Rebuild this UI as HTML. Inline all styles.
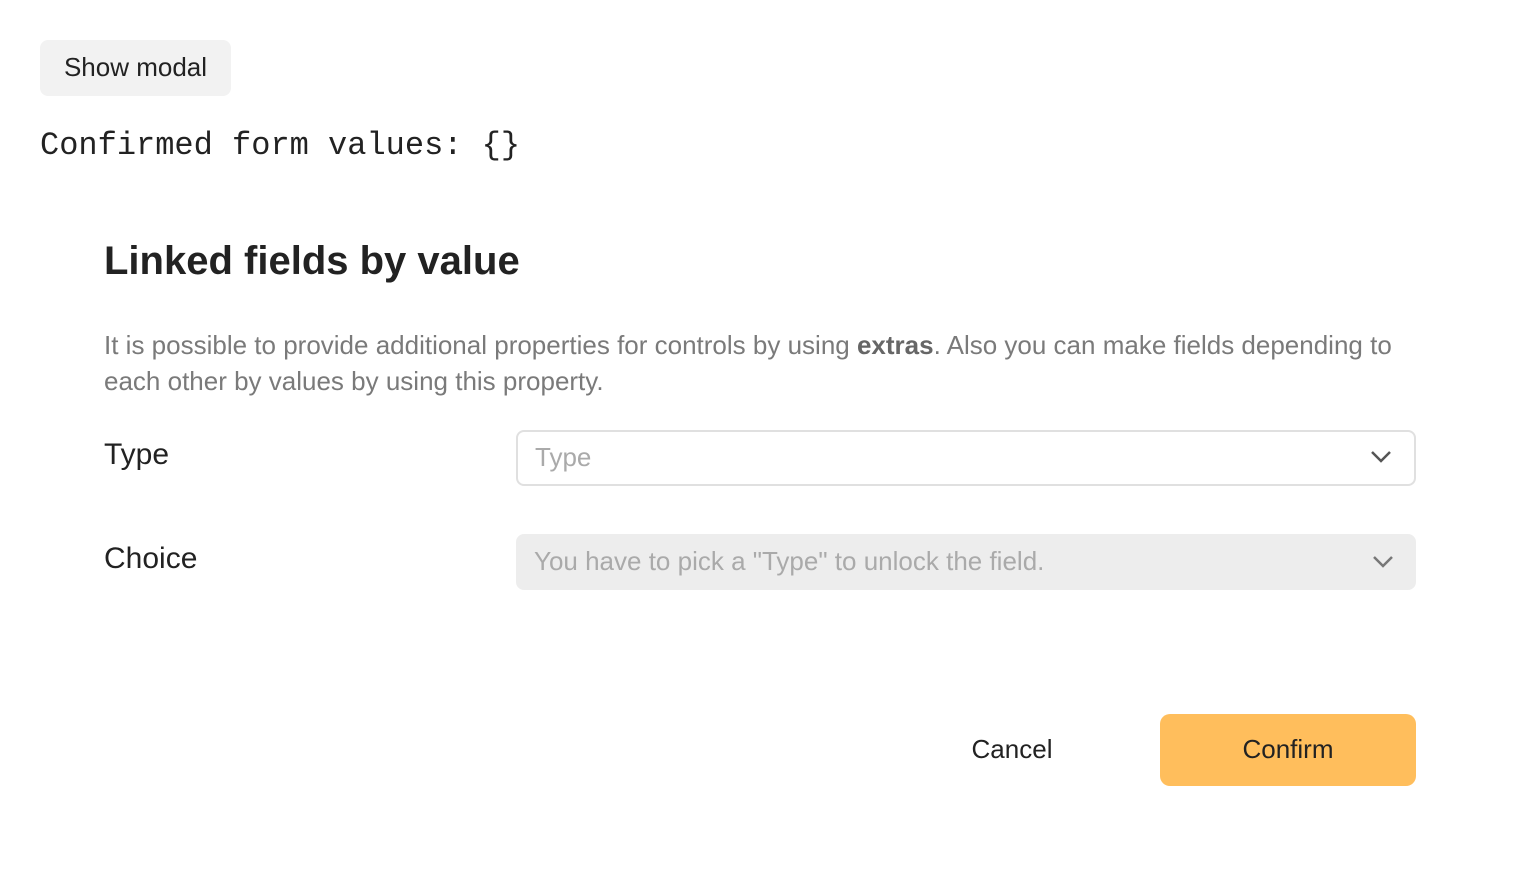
<!DOCTYPE html>
<html><head><style>
body{margin:0;width:1520px;height:882px;background:#fff;font-family:"Liberation Sans",sans-serif;position:relative;overflow:hidden}
.abs{position:absolute}
.btn{left:40px;top:40px;width:191px;height:56px;background:#f2f2f2;border-radius:8px;font-size:26px;color:#222;line-height:54px;text-align:center}
.mono{left:40px;top:130px;font-family:"Liberation Mono",monospace;font-size:32px;color:#222;line-height:32px}
h1{position:absolute;left:104px;top:239px;margin:0;font-size:40px;font-weight:bold;color:#222}
.desc{left:104px;top:327px;width:1320px;font-size:26px;line-height:36px;color:#7a7a7a}
.desc b{color:#666}
.lbl{left:104px;font-size:30px;color:#222}
.sel{left:516px;height:52px;border-radius:8px;font-size:26px;line-height:52px;padding-left:18px;box-sizing:border-box;width:900px}
.sel svg{position:absolute;right:22px;top:18px}
.cancel{left:912px;top:714px;width:200px;height:72px;line-height:70px;text-align:center;font-size:26px;color:#222}
.confirm{left:1160px;top:714px;width:256px;height:72px;line-height:70px;text-align:center;font-size:26px;color:#222;background:#ffbe5c;border-radius:10px}
</style></head><body>
<div class="abs btn">Show modal</div>
<div class="abs mono">Confirmed form values: {}</div>
<h1>Linked fields by value</h1>
<div class="abs desc">It is possible to provide additional properties for controls by using <b>extras</b>. Also you can make fields depending to each other by values by using this property.</div>
<div class="abs lbl" style="top:438px">Type</div>
<div class="abs sel" style="top:430px;height:56px;border:2px solid #e0e0e0;color:#aaa;line-height:50px;padding-left:17px">Type<svg width="22" height="14" viewBox="0 0 22 14"><path d="M2 2l9 9 9-9" stroke="#555" stroke-width="2.5" fill="none"/></svg></div>
<div class="abs lbl" style="top:542px">Choice</div>
<div class="abs sel" style="top:534px;height:56px;line-height:54px;background:#ededed;color:#aaa">You have to pick a "Type" to unlock the field.<svg width="22" height="14" viewBox="0 0 22 14" style="top:21px"><path d="M2 2l9 9 9-9" stroke="#777" stroke-width="2.5" fill="none"/></svg></div>
<div class="abs cancel">Cancel</div>
<div class="abs confirm">Confirm</div>
</body></html>
